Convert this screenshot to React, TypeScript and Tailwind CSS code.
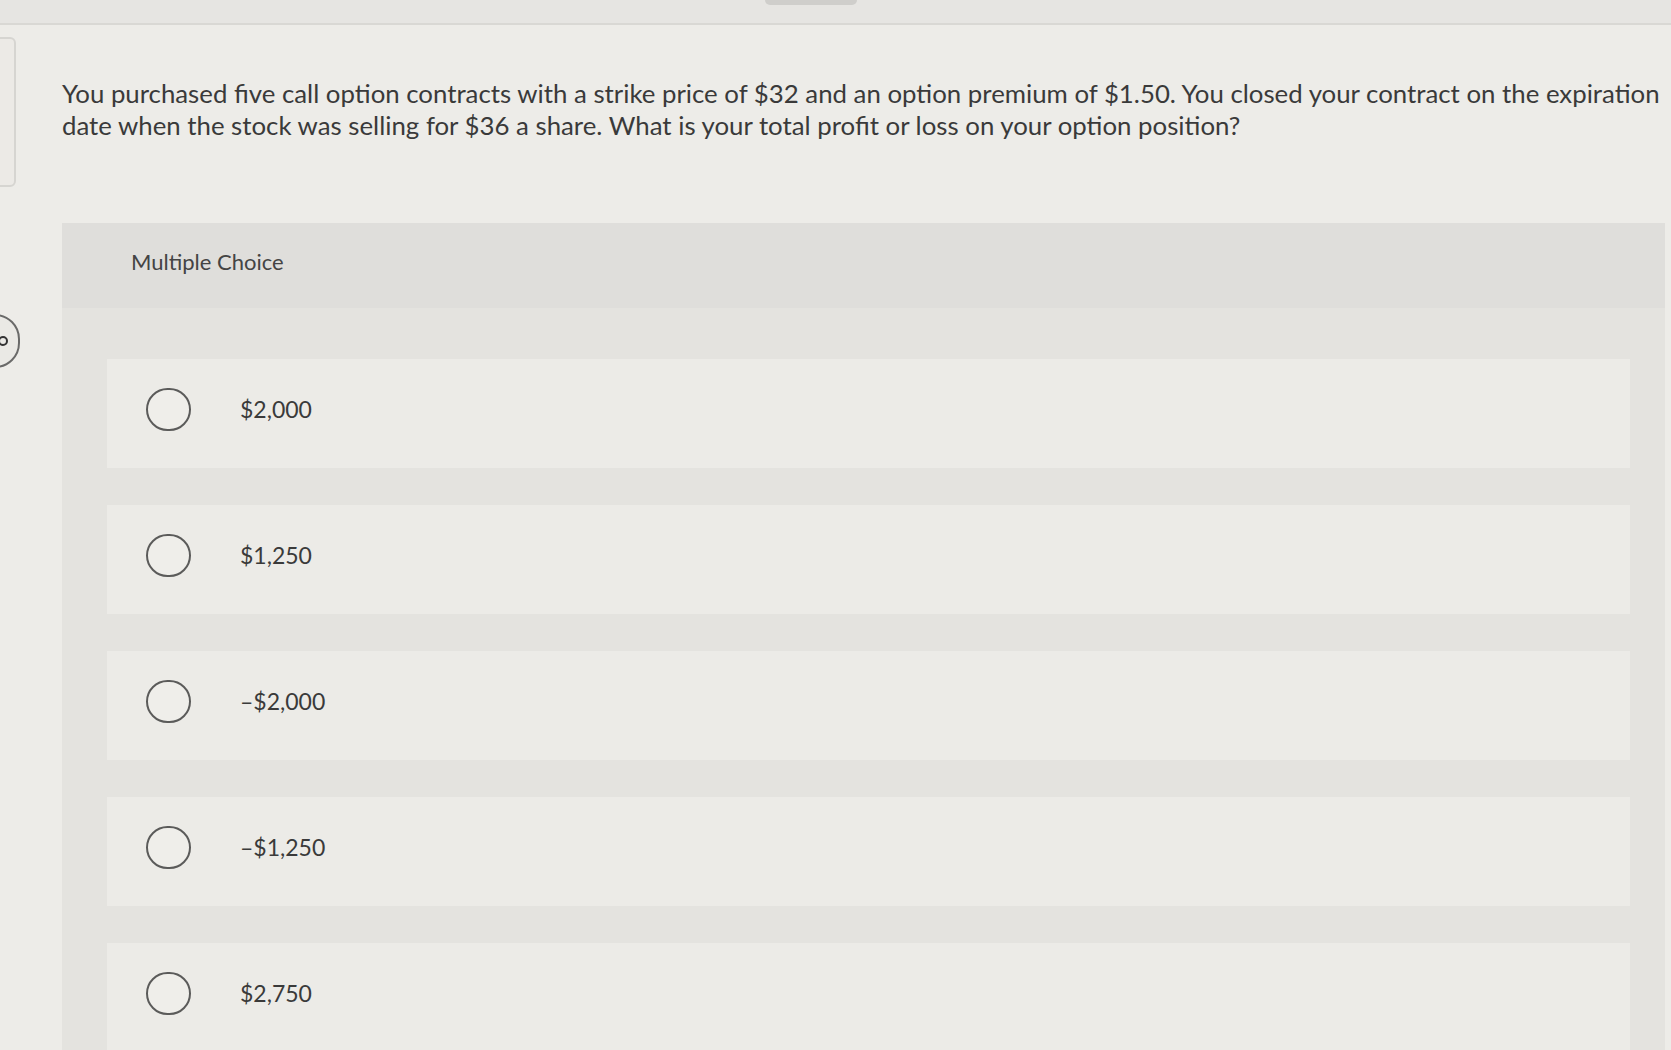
const OPTIONS = ["$2,000", "$1,250", "–$2,000", "–$1,250", "$2,750"];

function Radio() {
  return (
    <span className="w-[45px] h-[43px] shrink-0 rounded-full border-2 border-[#5b5b5a] bg-[#efeeea]" />
  );
}

export default function App() {
  return (
    <div
      className="relative w-[1671px] h-[1050px] overflow-hidden bg-[#edece8] text-[#3a3a3a]"
      style={{ fontFamily: "Lato, 'Open Sans', sans-serif" }}
    >
      {/* top strip with tab */}
      <div className="h-[25px] flex bg-[#e6e5e2] border-b-2 border-[#d9d8d4]">
        <div className="ml-[765px] w-[92px] h-[5px] rounded-b-md bg-[#cfcecb]" />
      </div>

      {/* left edge widgets, partly off screen */}
      <div className="absolute left-[-6px] top-[37px] w-[22px] h-[150px] rounded-md border-2 border-[#d6d5d1] bg-[#eceae6]" />
      <div className="absolute left-[-30px] top-[314px] w-[50px] h-[54px] flex items-center justify-end pr-[10px] rounded-full border-2 border-[#6a6a69] bg-[#eae9e5]">
        <span className="w-[10px] h-[10px] rounded-full border-2 border-[#333]" />
      </div>

      <div className="pl-[62px]">
        <p className="mt-[52px] text-[25.8px] leading-[32px] whitespace-nowrap">
          You purchased five call option contracts with a strike price of $32 and an option premium of $1.50. You closed your contract on the expiration
          <br />
          date when the stock was selling for $36 a share. What is your total profit or loss on your option position?
        </p>

        <div className="mt-[82px] w-[1603px] bg-[#e4e3df]">
          <div className="h-[85px] flex items-center pl-[69px] pb-[8px] bg-[#dfdedb] text-[22px] text-[#444]">
            Multiple Choice
          </div>
          <div className="pt-[51px] pl-[45px] pr-[35px] flex flex-col gap-[37px]">
            {OPTIONS.map((opt) => (
              <div
                key={opt}
                className="h-[109px] flex items-center pl-[39px] pb-[9px] gap-[49px] bg-[#ecebe7]"
              >
                <Radio />
                <span className="text-[23px]">{opt}</span>
              </div>
            ))}
          </div>
        </div>
      </div>
    </div>
  );
}
